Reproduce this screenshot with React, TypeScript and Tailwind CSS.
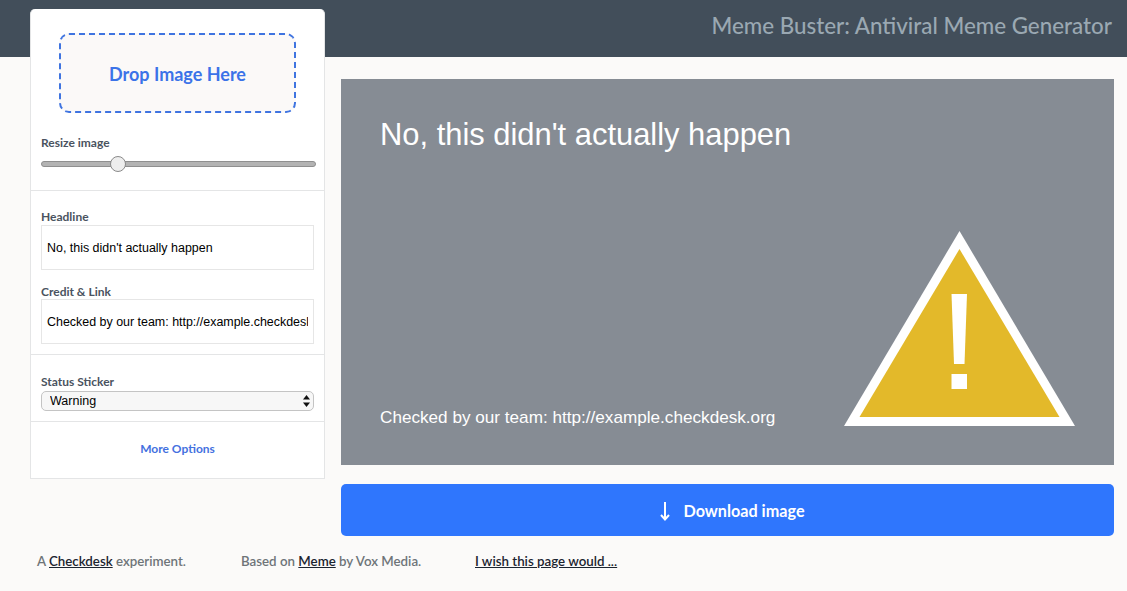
import React from 'react';

const label = "block font-['Lato',sans-serif] text-[12px] font-bold leading-[14px] text-[#4a5360]";
const field =
  "block w-full h-[45px] border border-[#e6e6e6] bg-white px-[5px] font-['Liberation_Sans',sans-serif] text-[12.45px] text-black outline-none";

const WarningSticker: React.FC = () => (
  <svg className="absolute left-[503px] top-[152px]" width="231" height="195" viewBox="0 0 231 195">
    <polygon points="115.5,0 231,195 0,195" fill="#ffffff" />
    <polygon points="115.5,18 215.5,186 15.5,186" fill="#e3b92a" />
    <polygon points="107.5,63 123,63 120.5,133 110,133" fill="#ffffff" />
    <rect x="107.5" y="143" width="15.5" height="15" fill="#ffffff" />
  </svg>
);

const App: React.FC = () => {
  return (
    <div className="h-[591px] w-[1127px] overflow-hidden bg-[#fbfaf9] font-['Lato',sans-serif]">
      <header className="flex h-[57px] items-start justify-end bg-[#424e5a] pr-[15px] pt-[12px]">
        <h1 className="text-[22.35px] font-medium leading-[28px] text-[#9aa8b2]">
          Meme Buster: Antiviral Meme Generator
        </h1>
      </header>

      <div className="flex items-start pl-[30px]">
        <aside className="relative -mt-[48px] h-[470px] w-[295px] rounded-t-[5px] border border-[#e4e5e6] border-t-0 bg-white">
          <section className="h-[182px] border-b border-[#e4e5e6] px-[10px] pt-[24px]">
            <div className="mx-[18px] flex h-[80px] w-[237px] items-center justify-center rounded-[10px] border-2 border-dashed border-[#3f74e0] bg-[#fbf9f8] pt-[3px] text-[18px] font-bold text-[#3b73e8]">
              Drop Image Here
            </div>
            <div className={`${label} mt-[23px]`}>Resize image</div>
            <div className="relative mt-[11px] h-[6px] w-[275px] rounded-full border border-[#8f8f8f] bg-[#b3b3b3]">
              <span className="absolute left-[68px] top-[-6px] h-[16px] w-[16px] rounded-full border border-[#8a8a8a] bg-[#eeeeee]" />
            </div>
          </section>

          <section className="h-[164px] border-b border-[#e4e5e6] px-[10px] pt-[19px]">
            <label className={label}>Headline</label>
            <input className={`${field} mt-[1px]`} defaultValue="No, this didn't actually happen" />
            <label className={`${label} mt-[15px]`}>Credit &amp; Link</label>
            <input className={field} defaultValue="Checked by our team: http://example.checkdesk.org" />
          </section>

          <section className="h-[67px] border-b border-[#e4e5e6] px-[10px] pt-[20px]">
            <label className={label}>Status Sticker</label>
            <div className="relative mt-[2px]">
              <select className="block h-[20px] w-full appearance-none rounded-[5px] border border-[#c4c4c4] bg-[#f7f7f7] pl-[8px] font-['Liberation_Sans',sans-serif] text-[12.5px] leading-[18px] text-black">
                <option>Warning</option>
              </select>
              <svg className="absolute right-[4px] top-[4px]" width="7" height="12" viewBox="0 0 7 12">
                <polygon points="3.5,0 7,4.5 0,4.5" fill="#111111" />
                <polygon points="0,7.5 7,7.5 3.5,12" fill="#111111" />
              </svg>
            </div>
          </section>

          <div className="pt-[19px] text-center text-[12px] font-bold leading-[15px] text-[#4471e0]">
            More Options
          </div>
        </aside>

        <main className="ml-[16px] mt-[22px] w-[773px]">
          <div className="relative flex h-[386px] flex-col justify-between bg-[#868c94] pb-[37px] pl-[39px] pt-[39px] font-['Liberation_Sans',sans-serif] text-white">
            <div className="text-[30.9px] leading-[34px]">No, this didn't actually happen</div>
            <div className="text-[17.15px] leading-[22px]">Checked by our team: http://example.checkdesk.org</div>
            <WarningSticker />
          </div>
          <button className="mt-[19px] flex h-[52px] w-full items-center justify-center rounded-[5px] bg-[#2f76fd] pl-[9px] pt-[2px] text-[16.2px] font-bold text-white">
            <svg className="mr-[12px]" width="12" height="20" viewBox="0 0 12 20" fill="none" stroke="#ffffff" strokeWidth="2">
              <path d="M6 1V18" />
              <path d="M2 14L6 18.5L10 14" />
            </svg>
            Download image
          </button>
        </main>
      </div>

      <footer className="flex pl-[37px] pt-[17px] text-[13.3px] font-semibold leading-[16px] text-[#6e7478]">
        <span className="w-[204px]">
          A <a className="text-[#1b2430] underline">Checkdesk</a> experiment.
        </span>
        <span className="w-[234px]">
          Based on <a className="text-[#1b2430] underline">Meme</a> by Vox Media.
        </span>
        <a className="text-[#1b2430] underline">I wish this page would ...</a>
      </footer>
    </div>
  );
};

export default App;
